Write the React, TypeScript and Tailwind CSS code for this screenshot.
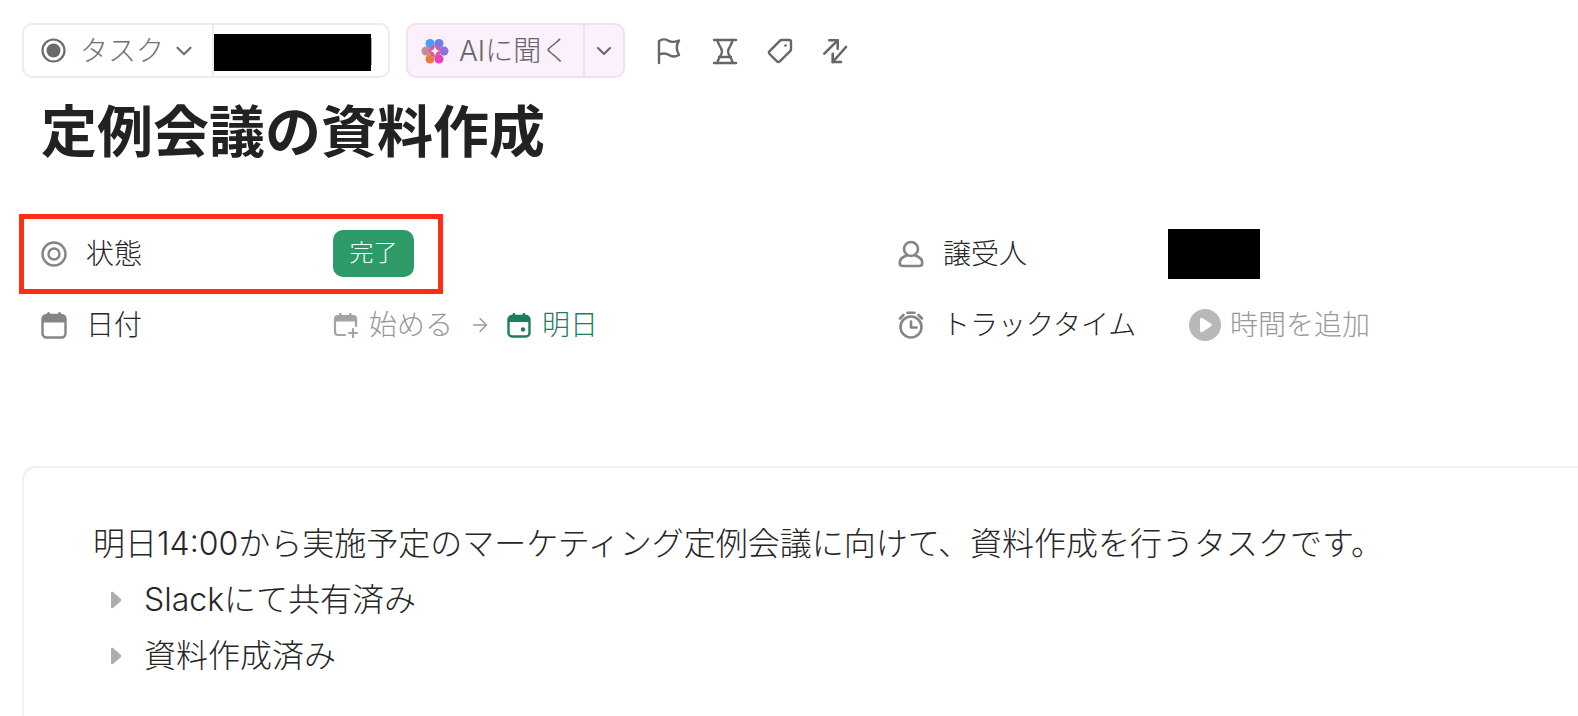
import { ChevronDown, ArrowRight } from "lucide-react";

const Flag = () => (
  <svg width="28" height="28" viewBox="0 0 28 28" fill="none" stroke="#666" strokeWidth="2.400" strokeLinecap="round" strokeLinejoin="round">
    <path d="M3 26V4C7 1.500 10 2 13 4c3 2 6 1 10-.5-3 4.500-3.500 8.500 0 14.500-4 2-7 2-10 0s-6-2-10-.5" />
  </svg>
);

const HourglassIcon = () => (
  <svg width="28" height="28" viewBox="0 0 28 28" fill="none" stroke="#666" strokeWidth="2.400" strokeLinecap="round" strokeLinejoin="round">
    <path d="M3 3h22M3 26h22M8 20h12" />
    <path d="M6.500 3c0 5 4.500 7 4.500 11.500S6.500 21 6.500 26" />
    <path d="M21.500 3c0 5-4.500 7-4.500 11.500S21.500 21 21.500 26" />
  </svg>
);

const TagIcon = () => (
  <svg width="28" height="28" viewBox="0 0 28 28" fill="none" stroke="#666" strokeWidth="2.400" strokeLinecap="round" strokeLinejoin="round">
    <path d="M15.500 3h7.500a2 2 0 0 1 2 2v7.500a2 2 0 0 1-.6 1.400L13.800 24.400a2 2 0 0 1-2.800 0L3.600 17a2 2 0 0 1 0-2.800L14.100 3.600A2 2 0 0 1 15.500 3Z" />
    <circle cx="19.500" cy="8.500" r="1.300" fill="#666" stroke="none" />
  </svg>
);

const SwapIcon = () => (
  <svg width="28" height="28" viewBox="0 0 28 28" fill="none" stroke="#666" strokeWidth="2.600" strokeLinecap="round" strokeLinejoin="round">
    <path d="M3.300 16.700 16.700 3.300" />
    <path d="M8.300 3.300h8.400v8.400" />
    <path d="M25 10 11.700 25" />
    <path d="M11.700 16.700V25H20" />
  </svg>
);

const AiLogo = () => (
  <svg width="28" height="28" viewBox="0 0 28 28">
    <defs>
      <filter id="soft">
        <feGaussianBlur stdDeviation="0.7" />
      </filter>
    </defs>
    <g filter="url(#soft)">
      <circle cx="9" cy="6.500" r="4.500" fill="#4f9bf5" />
      <circle cx="18" cy="6.500" r="4.500" fill="#6d7cf0" />
      <circle cx="5" cy="14" r="4.500" fill="#c08f95" />
      <circle cx="23" cy="14" r="4.500" fill="#8a6fe0" />
      <circle cx="9" cy="22" r="4.500" fill="#f0793c" />
      <circle cx="18" cy="22" r="4.500" fill="#e83fc0" />
      <circle cx="14" cy="14" r="6" fill="#d85a9a" />
    </g>
    <path d="M14 9c.6 3.200 1.800 4.400 5 5-3.200.6-4.400 1.800-5 5-.6-3.200-1.800-4.400-5-5 3.200-.6 4.400-1.800 5-5Z" fill="#fdf3fc" />
  </svg>
);

const StatusIcon = () => (
  <svg width="26" height="26" viewBox="0 0 26 26" fill="none">
    <circle cx="13" cy="13" r="11.500" stroke="#858585" strokeWidth="2.400" />
    <circle cx="13" cy="13" r="5.500" stroke="#858585" strokeWidth="2.400" />
  </svg>
);

const CalendarIcon = () => (
  <svg width="26" height="28" viewBox="0 0 26 28" fill="none">
    <rect x="1.500" y="4" width="23" height="22.500" rx="4" stroke="#858585" strokeWidth="2.400" />
    <path d="M1.500 5h23v6.500h-23z" fill="#858585" />
    <rect x="6" y="1" width="3" height="6" rx="1.500" fill="#858585" />
    <rect x="17" y="1" width="3" height="6" rx="1.500" fill="#858585" />
  </svg>
);

const CalendarPlus = () => (
  <svg width="26" height="26" viewBox="0 0 26 26" fill="none">
    <path d="M12 23H5a3 3 0 0 1-3-3V7a3 3 0 0 1 3-3h15a3 3 0 0 1 3 3v7" stroke="#a3a3a3" strokeWidth="2.200" strokeLinecap="round" />
    <path d="M2.500 5h20v4.500h-20z" fill="#a3a3a3" />
    <rect x="6" y="1" width="2.600" height="5" rx="1.300" fill="#a3a3a3" />
    <rect x="16" y="1" width="2.600" height="5" rx="1.300" fill="#a3a3a3" />
    <path d="M20 17v8M16 21h8" stroke="#a3a3a3" strokeWidth="2.200" strokeLinecap="round" />
  </svg>
);

const CalendarDue = () => (
  <svg width="24" height="26" viewBox="0 0 24 26" fill="none">
    <rect x="1.500" y="4" width="21" height="20.500" rx="3.500" stroke="#1d7f58" strokeWidth="2.400" />
    <path d="M2 5h20v5H2z" fill="#1d7f58" />
    <rect x="5.500" y="1" width="2.800" height="5" rx="1.400" fill="#1d7f58" />
    <rect x="15.500" y="1" width="2.800" height="5" rx="1.400" fill="#1d7f58" />
    <circle cx="16" cy="17.500" r="2.200" fill="#1d7f58" />
  </svg>
);

const PersonIcon = () => (
  <svg width="26" height="28" viewBox="0 0 26 28" fill="none" stroke="#858585" strokeWidth="2.600" strokeLinejoin="round">
    <circle cx="13" cy="9" r="7" />
    <path d="M9.500 15.200C5 16.500 1.700 19.500 1.700 23c0 2 1.300 3 3.300 3h16c2 0 3.300-1 3.300-3 0-3.500-3.300-6.500-7.800-7.800" />
  </svg>
);

const ClockIcon = () => (
  <svg width="26" height="28" viewBox="0 0 26 28" fill="none" stroke="#858585" strokeWidth="2.600" strokeLinecap="round" strokeLinejoin="round">
    <circle cx="13" cy="16" r="10.500" />
    <path d="M13 10.500V16.500H18.500" />
    <path d="M9.500 1.800h7" />
    <path d="M2 7.500 5.500 4M24 7.500 20.500 4" />
  </svg>
);

const PlayCircle = () => (
  <svg width="32" height="32" viewBox="0 0 32 32">
    <circle cx="16" cy="16" r="16" fill="#b8b8b8" />
    <path d="M11 10.200c0-1.200 1.300-2 2.300-1.300l8.800 5.800c.9.600.9 2 0 2.600l-8.800 5.800c-1 .7-2.300-.1-2.300-1.300Z" fill="#fff" />
  </svg>
);

const Bullet = () => (
  <svg width="12" height="18" viewBox="0 0 12 18">
    <path d="M1 2.500C1 1 2.300.4 3.300 1.200l7.400 6.600c.8.600.8 1.800 0 2.400l-7.400 6.600C2.300 17.600 1 17 1 15.500Z" fill="#adadad" />
  </svg>
);

export default function App() {
  return (
    <div className="h-[716px] w-[1578px] overflow-hidden bg-white font-['Inter','Noto_Sans_CJK_JP',sans-serif] font-light text-[#262626]">
      <div className="mt-[23px] flex h-[55px] items-center pl-[22px]">
        <div className="flex h-[55px] w-[368px] rounded-[10px] border-2 border-[#ececec]">
          <div className="flex w-[190px] items-center border-r-2 border-[#ececec] pl-[17px] text-[#707070]">
            <svg width="25" height="25" viewBox="0 0 25 25" fill="none">
              <circle cx="12.500" cy="12.500" r="11" stroke="#6b6b6b" strokeWidth="2.200" />
              <circle cx="12.500" cy="12.500" r="7" fill="#6b6b6b" />
            </svg>
            <span className="ml-[14px] text-[28px] leading-none">タスク</span>
            <ChevronDown className="ml-[7px] h-[26px] w-[26px]" strokeWidth={2} />
          </div>
          <div className="my-[9px] h-[37px] w-[157px] bg-black" />
          <div className="my-[13px] h-[27px] w-[1px] bg-[#aaa]" />
        </div>
        <div className="ml-[16px] flex h-[55px] w-[219px] rounded-[10px] border-2 border-[#efe1ef] bg-[#fbf0fb] text-[#666]">
          <div className="flex w-[177px] items-center border-r-2 border-[#efe1ef] pl-[13px]">
            <AiLogo />
            <span className="ml-[10px] text-[28px] leading-none">AIに聞く</span>
          </div>
          <div className="flex flex-1 items-center justify-center">
            <ChevronDown className="h-[24px] w-[24px]" strokeWidth={2} />
          </div>
        </div>
        <div className="ml-[31px] flex items-center gap-[27px]">
          <Flag />
          <HourglassIcon />
          <TagIcon />
          <SwapIcon />
        </div>
      </div>

      <h1 className="ml-[41px] mt-[22px] whitespace-nowrap text-[56px] font-bold leading-[64px] text-[#222]">定例会議の資料作成</h1>

      <div className="mt-[50px] flex h-[80px] items-stretch pl-[19px]">
        <div className="flex w-[424px] items-center border-[5px] border-[#ff2d16] pl-[17px]">
          <StatusIcon />
          <span className="ml-[19px] w-[247px] text-[28px]">状態</span>
          <span className="mb-[2px] flex h-[47px] w-[81px] items-center justify-center rounded-[10px] bg-[#2e9a68] text-[24px] text-white">完了</span>
        </div>
        <div className="ml-[455px] flex items-center">
          <PersonIcon />
          <span className="ml-[19px] w-[225px] text-[28px]">譲受人</span>
          <div className="h-[50px] w-[92px] bg-black" />
        </div>
      </div>

      <div className="mt-[1px] flex h-[60px] items-center pl-[41px]">
        <CalendarIcon />
        <span className="ml-[19px] w-[247px] text-[28px]">日付</span>
        <div className="flex w-[565px] items-center text-[#999]">
          <CalendarPlus />
          <span className="ml-[10px] text-[28px]">始める</span>
          <ArrowRight className="mx-[16px] h-[22px] w-[22px] text-[#999]" strokeWidth={1.500} />
          <CalendarDue />
          <span className="ml-[11px] text-[28px] text-[#1d7f58]">明日</span>
        </div>
        <ClockIcon />
        <span className="ml-[18px] w-[247px] text-[28px]">トラックタイム</span>
        <PlayCircle />
        <span className="ml-[9px] text-[28px] text-[#999]">時間を追加</span>
      </div>

      <div className="ml-[22px] mt-[111px] h-[400px] w-[1600px] rounded-[14px] border-2 border-[#f0f0f0] pl-[69px] pt-[48px] text-[32px] leading-[56px]">
        <p className="whitespace-nowrap">明日14:00から実施予定のマーケティング定例会議に向けて、資料作成を行うタスクです。</p>
        <ul>
          <li className="flex items-center">
            <span className="ml-[17px] flex w-[34px]"><Bullet /></span>
            <span>Slackにて共有済み</span>
          </li>
          <li className="flex items-center">
            <span className="ml-[17px] flex w-[34px]"><Bullet /></span>
            <span>資料作成済み</span>
          </li>
        </ul>
      </div>
    </div>
  );
}
